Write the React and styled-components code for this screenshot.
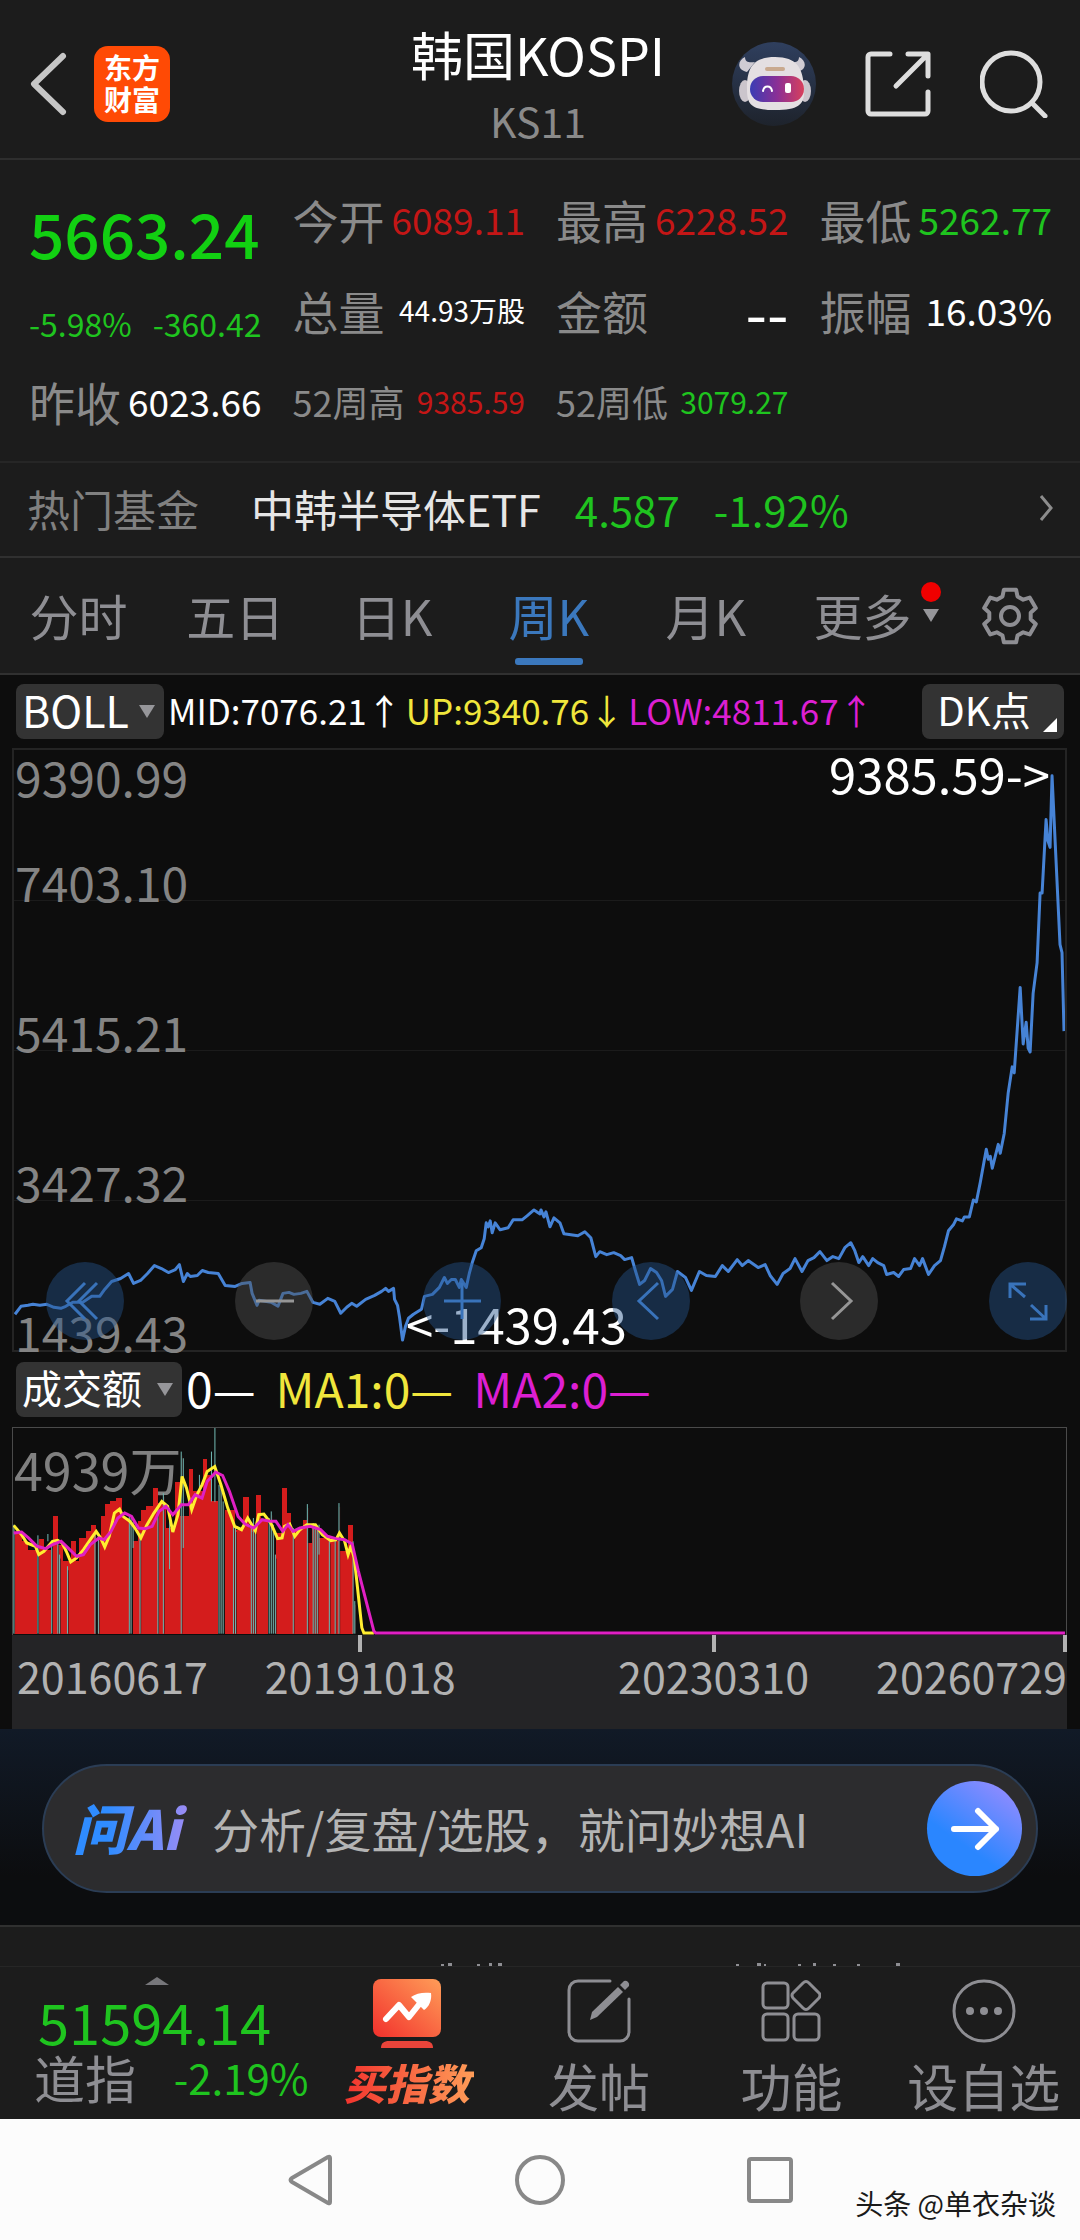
import React, { useState } from 'react';
import styled, { createGlobalStyle, css } from 'styled-components';

const GREEN = '#1fc41f';
const RED = '#c41616';
const WHITE = '#ffffff';
const YELLOW = '#f0e63c';
const MAGENTA = '#dc1fd2';
const BLUE = '#3b78bd';

const QUOTES = [
  { label: '今开', value: '6089.11', color: RED },
  { label: '最高', value: '6228.52', color: RED },
  { label: '最低', value: '5262.77', color: GREEN },
  { label: '总量', value: '44.93万股', color: WHITE, size: 28 },
  { label: '金额', value: '--', color: WHITE, size: 62 },
  { label: '振幅', value: '16.03%', color: WHITE },
  { label: '昨收', value: '6023.66', color: WHITE },
  { label: '52周高', value: '9385.59', color: RED, size: 30, small: true },
  { label: '52周低', value: '3079.27', color: GREEN, size: 30, small: true },
];

const TABS = ['分时', '五日', '日K', '周K', '月K', '更多'];

const PRICE_LINE =
  '1,568 7,560 14,559 19,558 26,559 33,558 40,561 47,562 52,560 59,556 69,556 78,550 86,550 91,543 98,535 107,532 115,527 120,537 127,534 134,527 141,519 148,522 155,526 162,523 166,518 170,535 174,527 177,530 184,529 189,524 195,526 205,527 212,539 222,540 229,537 237,536 239,547 244,559 246,554 258,556 265,560 270,547 276,546 281,548 288,547 294,545 300,556 307,558 315,552 322,555 328,567 334,561 339,557 344,560 353,553 362,549 369,545 373,542 376,545 381,542 382,553 385,559 387,571 390,594 393,580 396,572 401,568 409,563 412,550 420,548 427,541 432,531 435,537 439,533 443,533 447,541 449,533 454,541 457,527 460,516 464,504 469,501 472,492 474,476 476,480 478,474 480,486 483,476 488,483 496,481 501,473 510,473 515,469 522,463 528,467 ' +
  '529,463 532,470 534,465 538,480 542,471 548,476 552,487 559,488 566,489 573,485 579,491 584,510 588,505 595,508 602,506 609,509 613,513 620,511 624,525 628,538 633,534 639,522 645,526 650,534 654,550 661,543 666,525 674,531 680,544 688,525 695,529 704,530 711,519 717,525 726,513 731,519 737,514 747,521 754,518 759,529 766,538 772,527 779,522 784,512 791,525 797,514 803,511 809,505 816,514 822,510 828,512 834,501 840,496 844,504 848,516 852,510 858,519 862,512 867,516 873,519 876,528 883,526 888,530 893,523 900,522 904,512 909,519 912,512 918,528 924,519 930,514 934,500 938,484 943,478 946,472 952,474 954,470 959,470 963,453 966,455 970,435 976,402 978,412 980,409 982,421 988,397 990,406 994,386 998,345 1002,319 1004,325 1010,239 1013,296 1016,274 1018,300 1020,304 1023,245 1027,214 1030,144 1032,144 1036,70 1038,92 1040,98 1042,26 1045,90 1050,196 1052,204 1054,283';

// [from, to, top]
const RED_BARS = [
  [37, 60, 575], [60, 80, 600], [80, 105, 625], [110, 125, 592], [125, 146, 625], [151, 166, 525],
  [166, 180, 612], [180, 203, 660], [204, 218, 598], [218, 226, 660], [226, 246, 590], [246, 262, 570],
  [262, 276, 550], [282, 290, 585], [290, 302, 525], [302, 318, 487], [318, 335, 480], [335, 352, 471],
  [352, 372, 530], [384, 400, 600], [400, 407, 540], [407, 422, 505], [422, 442, 495], [442, 456, 441],
  [456, 480, 485], [480, 505, 560], [505, 520, 423], [520, 546, 525], [546, 560, 381], [560, 587, 450],
  [587, 600, 351], [600, 612, 400], [612, 632, 480], [652, 680, 505], [680, 703, 565], [703, 722, 468],
  [722, 743, 560], [743, 758, 462], [758, 778, 540], [800, 818, 575], [818, 832, 441], [832, 845, 515],
  [845, 878, 565], [878, 890, 535], [890, 906, 605], [906, 925, 560], [925, 957, 590], [957, 985, 600],
  [985, 1010, 628], [1010, 1025, 552],
];

// [x, top, bottom]
const TEAL_BARS = [
  [37, 550, 878], [107, 582, 878], [136, 578, 600], [147, 610, 878], [165, 600, 878], [170, 640, 878],
  [193, 675, 878], [273, 580, 878], [283, 580, 878], [373, 520, 878], [378, 530, 878], [384, 540, 620],
  [404, 575, 878], [456, 500, 878], [472, 455, 878], [490, 500, 684], [524, 330, 878], [530, 350, 620],
  [577, 400, 440], [612, 330, 480], [622, 259, 482], [634, 430, 878], [640, 440, 878], [646, 480, 878],
  [676, 545, 878], [682, 560, 878], [728, 560, 878], [734, 530, 878], [740, 560, 878], [780, 530, 878],
  [786, 510, 878], [792, 550, 878], [798, 640, 878], [850, 560, 878], [891, 488, 878], [908, 545, 878],
  [914, 550, 878], [920, 560, 878], [925, 550, 640], [955, 595, 878], [972, 590, 878], [983, 485, 878],
  [1024, 600, 878], [1029, 780, 878],
];

const MA1_LINE =
  '37,552 60,580 75,605 100,615 110,640 125,630 150,600 165,597 178,605 190,630 203,662 220,650 240,625 260,595 277,570 290,590 302,617 315,585 330,515 345,503 355,525 375,540 390,560 407,590 425,550 445,515 468,480 485,495 500,572 515,520 527,405 540,440 555,505 570,460 585,430 600,390 622,375 640,430 660,500 680,555 700,565 718,530 740,568 750,520 765,518 785,545 805,592 818,590 825,555 840,548 855,585 870,565 890,550 915,550 935,580 960,598 975,595 985,575 1000,600 1010,640 1018,615 1028,650 1050,860 1056,876 1085,876';
const MA2_LINE =
  '37,575 60,572 80,590 105,615 130,622 150,610 175,600 195,620 220,645 240,640 260,610 285,590 300,595 320,570 340,530 360,515 380,525 400,560 420,562 440,555 460,510 480,495 500,520 525,490 545,490 565,460 585,470 600,420 625,392 645,402 665,450 690,525 710,548 735,560 760,535 785,540 800,540 820,570 835,550 850,570 870,560 900,555 930,565 950,585 975,592 1000,595 1022,608 1040,690 1085,870 1090,876 3096,876';

const polar = (r, deg) => {
  const a = (deg * Math.PI) / 180;
  return `${(30 + r * Math.sin(a)).toFixed(1)},${(30 - r * Math.cos(a)).toFixed(1)}`;
};
const GEAR = [0, 60, 120, 180, 240, 300]
  .flatMap((d) => [polar(21, d - 21), polar(27, d - 13), polar(27, d + 13), polar(21, d + 21)])
  .join(' ');

const RobotIcon = () => (
  <svg width="84" height="84" viewBox="0 0 84 84">
    <defs>
      <linearGradient id="visor" x1="0" x2="1">
        <stop offset="0" stopColor="#3a3cb4" />
        <stop offset="0.5" stopColor="#8a2f96" />
        <stop offset="1" stopColor="#d8405c" />
      </linearGradient>
      <linearGradient id="disc" x1="0" y1="0" x2="0" y2="1">
        <stop offset="0" stopColor="#2f3f5e" />
        <stop offset="1" stopColor="#1e232c" />
      </linearGradient>
    </defs>
    <circle cx="42" cy="42" r="42" fill="url(#disc)" />
    <path d="M13 15c-8 4-8 13 2 15l8-10c-6 1-10 0-10-5zM67 15c8 4 8 13-2 15l-8-10c6 1 10 0 10-5z" fill="#cfcbd3" />
    <ellipse cx="13" cy="49" rx="6" ry="11" fill="#cbc5cc" />
    <ellipse cx="73" cy="49" rx="6" ry="11" fill="#cbc5cc" />
    <path d="M15 46c0-20 6-31 28-31s28 11 29 31c1 16-4 22-29 22S15 62 15 46z" fill="#e4dfe2" />
    <rect x="33" y="25" width="20" height="4" rx="2" fill="#c9a98f" />
    <rect x="18" y="34" width="54" height="26" rx="13" fill="url(#visor)" />
    <path d="M31 49c1-6 8-6 9 0" fill="none" stroke="#fff" strokeWidth="2" strokeLinecap="round" />
    <rect x="53" y="41" width="6" height="10" rx="2" fill="#fff" />
  </svg>
);

const ShareIcon = () => (
  <svg width="66" height="66" viewBox="0 0 66 66" fill="none" stroke="#dedede" strokeWidth="5" strokeLinecap="round" strokeLinejoin="round">
    <path d="M25 3H6a3 3 0 0 0-3 3v54a3 3 0 0 0 3 3h54a3 3 0 0 0 3-3V41" />
    <path d="M43 3h20v22M62 4L31 35" />
  </svg>
);

const SearchIcon = () => (
  <svg width="68" height="68" viewBox="0 0 68 68" fill="none" stroke="#dedede" strokeWidth="5" strokeLinecap="round">
    <circle cx="31" cy="32" r="29" />
    <path d="M52 53l13 13" />
  </svg>
);

const ToolIcon = ({ d, color }) => (
  <svg width="78" height="78" viewBox="0 0 78 78" fill="none" stroke={color} strokeWidth="3">
    <path d={d} />
  </svg>
);

const TOOLS = [
  { name: '快退', blue: true, d: 'M39 21L21 39l18 18M51 21L33 39l18 18' },
  { name: '缩小', d: 'M21 39h38' },
  { name: '放大', blue: true, d: 'M21 39h37M39 21v36' },
  { name: '左移', blue: true, d: 'M46 21L27 39l19 18' },
  { name: '右移', d: 'M32 21l19 18-19 18' },
  { name: '全屏', blue: true, d: 'M37 22H21v14M21 22l15 13M57 43v14H41M57 57L42 43' },
];

const Kline = () => (
  <ChartBox>
    <ChartBand first>
      <AxisLabel>9390.99</AxisLabel>
      <AxisLabel>7403.10</AxisLabel>
    </ChartBand>
    <ChartBand><AxisLabel>5415.21</AxisLabel></ChartBand>
    <ChartBand><AxisLabel>3427.32</AxisLabel></ChartBand>
    <ChartBand><AxisLabel>1439.43</AxisLabel></ChartBand>
    <Plot viewBox="0 0 1055 604" preserveAspectRatio="none">
      <polyline points={PRICE_LINE} fill="none" stroke="#4683d6" strokeWidth="3" strokeLinejoin="round" vectorEffect="non-scaling-stroke" />
    </Plot>
    <HighMark>9385.59-&gt;</HighMark>
    <LowMark>&lt;-1439.43</LowMark>
    <ToolRow>
      {TOOLS.map((t) => (
        <ToolButton key={t.name} blue={t.blue ? 1 : 0} aria-label={t.name}>
          <ToolIcon d={t.d} color={t.blue ? '#3973ba' : '#969696'} />
        </ToolButton>
      ))}
    </ToolRow>
  </ChartBox>
);

const Volume = () => (
  <VolumeBox>
    <VolumeLabel>4939万</VolumeLabel>
    <Plot viewBox="35 259 3064 623" preserveAspectRatio="none">
      {RED_BARS.map(([from, to, top]) => (
        <rect key={from} x={from} y={top} width={to - from} height={880 - top} fill="#d41c1c" shapeRendering="crispEdges" />
      ))}
      {TEAL_BARS.map(([x, top, bottom]) => (
        <g key={x}>
          {bottom > 800 && <rect x={x + 1} y={top + 12} width="3" height={bottom - top - 12} fill="#3a1a1a" />}
          <rect x={x - 1} y={top} width="3" height={bottom - top} fill="#6fb5b0" />
        </g>
      ))}
      <polyline points={MA1_LINE} fill="none" stroke="#ffee30" strokeWidth="3" vectorEffect="non-scaling-stroke" />
      <polyline points={MA2_LINE} fill="none" stroke="#e01fc4" strokeWidth="3" vectorEffect="non-scaling-stroke" />
    </Plot>
  </VolumeBox>
);

const App = () => {
  const [activeTab, setActiveTab] = useState('周K');

  return (
    <Page>
      <GlobalStyle />
      <Header>
        <HeaderSide>
          <IconButton aria-label="返回">
            <svg width="40" height="68" viewBox="0 0 40 68" fill="none" stroke="#c6c6c6" strokeWidth="6" strokeLinecap="round" strokeLinejoin="round">
              <path d="M35 6L6 34l29 28" />
            </svg>
          </IconButton>
          <Logo href="#">东方<br />财富</Logo>
        </HeaderSide>
        <TitleBlock>
          <Title>韩国KOSPI</Title>
          <Code>KS11</Code>
        </TitleBlock>
        <HeaderSide end>
          <IconButton aria-label="助手"><RobotIcon /></IconButton>
          <IconButton aria-label="分享"><ShareIcon /></IconButton>
          <IconButton aria-label="搜索"><SearchIcon /></IconButton>
        </HeaderSide>
      </Header>

      <QuotePanel>
        <Lead>
          <Price>5663.24</Price>
          <Change><span>-5.98%</span><span>-360.42</span></Change>
        </Lead>
        {QUOTES.map((q) => (
          <Quote key={q.label}>
            <QuoteLabel small={q.small ? 1 : 0}>{q.label}</QuoteLabel>
            <QuoteValue color={q.color} size={q.size}>{q.value}</QuoteValue>
          </Quote>
        ))}
      </QuotePanel>

      <FundRow href="#">
        <FundLabel>热门基金</FundLabel>
        <FundName>中韩半导体ETF</FundName>
        <FundValue>4.587</FundValue>
        <FundValue>-1.92%</FundValue>
        <svg width="14" height="26" viewBox="0 0 14 26" fill="none" stroke="#8c8c8c" strokeWidth="3">
          <path d="M2 1l10 12-10 12" />
        </svg>
      </FundRow>

      <Tabs>
        {TABS.map((name) => (
          <Tab key={name} active={name === activeTab ? 1 : 0} onClick={() => setActiveTab(name)}>
            {name}
            {name === '更多' && (
              <TabMore>
                <Dot />
                <Caret />
              </TabMore>
            )}
          </Tab>
        ))}
        <GearButton aria-label="设置">
          <svg width="60" height="60" viewBox="0 0 60 60" fill="none" stroke="#8e8e93" strokeWidth="4" strokeLinejoin="round">
            <polygon points={GEAR} />
            <circle cx="30" cy="30" r="9" />
          </svg>
        </GearButton>
      </Tabs>

      <ChartArea>
        <IndicatorRow>
          <Picker>
            <PickerSelect aria-label="主图指标" chars={107} size={43}><option>BOLL</option></PickerSelect>
            <Caret />
          </Picker>
          <Indicator color={WHITE}>MID:7076.21↑</Indicator>
          <Indicator color={YELLOW}>UP:9340.76↓</Indicator>
          <Indicator color={MAGENTA}>LOW:4811.67↑</Indicator>
          <DkButton>DK点<Corner /></DkButton>
        </IndicatorRow>
        <Kline />
        <VolumeRow>
          <Picker>
            <PickerSelect aria-label="副图指标" chars={125} size={40}><option>成交额</option></PickerSelect>
            <Caret />
          </Picker>
          <VolumeValue color={WHITE}>0—</VolumeValue>
          <VolumeValue color={YELLOW}>MA1:0—</VolumeValue>
          <VolumeValue color={MAGENTA}>MA2:0—</VolumeValue>
        </VolumeRow>
        <Volume />
        <DateAxis>
          <DateCell align="flex-start"><Tick hidden />20160617</DateCell>
          <DateCell align="center"><Tick />20191018</DateCell>
          <DateCell align="center"><Tick />20230310</DateCell>
          <DateCell align="flex-end"><Tick />20260729</DateCell>
        </DateAxis>
      </ChartArea>

      <AskPanel>
        <AskBox>
          <AskLogo>问Ai</AskLogo>
          <AskInput aria-label="提问" placeholder="分析/复盘/选股，就问妙想AI" />
          <SendButton aria-label="发送">
            <svg width="50" height="46" viewBox="0 0 50 46" fill="none" stroke="#fff" strokeWidth="6" strokeLinecap="round" strokeLinejoin="round">
              <path d="M4 23h42M28 5l18 18-18 18" />
            </svg>
          </SendButton>
        </AskBox>
      </AskPanel>

      <Peek>
        <svg width="480" height="3" viewBox="0 0 480 3" fill="#8e8e93">
          <path d="M0 1h3v2H0zM7 0h4v3H7zM36 1h3v2h-3zM48 0h3v3h-3zM57 0h4v3h-4zM295 1h3v2h-3zM316 0h4v3h-4zM323 1h2v2h-2zM357 1h3v2h-3zM372 0h3v3h-3zM392 1h3v2h-3zM416 1h3v2h-3zM455 0h4v3h-4z" />
        </svg>
      </Peek>

      <BottomBar>
        <IndexBlock href="#">
          <UpCaret />
          <IndexPrice>51594.14</IndexPrice>
          <IndexLine><IndexName>道指</IndexName><span>-2.19%</span></IndexLine>
        </IndexBlock>
        <Action>
          <svg width="68" height="70" viewBox="0 0 68 70">
            <defs>
              <linearGradient id="buy" x1="0" y1="1" x2="1" y2="0">
                <stop offset="0" stopColor="#f2302c" />
                <stop offset="1" stopColor="#ff9d58" />
              </linearGradient>
            </defs>
            <rect width="68" height="58" rx="8" fill="url(#buy)" />
            <path d="M8 69c0-5 3-7 8-7h36c5 0 8 2 8 7z" fill="#e8443a" />
            <path d="M13 40l13-14 10 12 12-15" fill="none" stroke="#fff" strokeWidth="6" strokeLinecap="round" strokeLinejoin="round" />
            <path d="M38 18c5-4 13-5 20-4 1 7-2 14-7 17z" fill="#fff" />
          </svg>
          <BuyLabel>买指数</BuyLabel>
        </Action>
        <Action>
          <svg width="64" height="64" viewBox="0 0 64 64" fill="none" stroke="#8e8e93" strokeWidth="3" strokeLinecap="round">
            <path d="M43 2H11a9 9 0 0 0-9 9v42a9 9 0 0 0 9 9h42a9 9 0 0 0 9-9V20" />
            <path d="M23 41l2-8 26-25 5 5-26 25z" fill="#8e8e93" stroke="none" />
            <path d="M53 6l4-4a4 4 0 0 1 5 5l-4 4z" fill="#8e8e93" stroke="none" />
          </svg>
          <ActionLabel>发帖</ActionLabel>
        </Action>
        <Action>
          <svg width="60" height="64" viewBox="0 0 60 64" fill="none" stroke="#8e8e93" strokeWidth="3" strokeLinejoin="round">
            <rect x="2" y="4" width="25" height="25" rx="4" />
            <rect x="2" y="35" width="25" height="26" rx="4" />
            <rect x="33" y="35" width="25" height="26" rx="4" />
            <path d="M42 4q3-3 6 0l10 10q2 2 0 5L48 29q-3 3-6 0L32 19q-2-3 0-5z" />
          </svg>
          <ActionLabel>功能</ActionLabel>
        </Action>
        <Action>
          <svg width="64" height="64" viewBox="0 0 64 64" fill="#8e8e93">
            <circle cx="32" cy="32" r="30" fill="none" stroke="#8e8e93" strokeWidth="3" />
            <circle cx="18" cy="32" r="4" />
            <circle cx="32" cy="32" r="4" />
            <circle cx="46" cy="32" r="4" />
          </svg>
          <ActionLabel>设自选</ActionLabel>
        </Action>
      </BottomBar>

      <SystemNav>
        <NavButton aria-label="后退">
          <svg width="50" height="54" viewBox="0 0 50 54" fill="none" stroke="#888" strokeWidth="4" strokeLinejoin="round">
            <path d="M45 5v44q0 2-2 1L7 29q-3-2 0-4L43 4q2-1 2 1z" />
          </svg>
        </NavButton>
        <NavButton aria-label="主页">
          <svg width="50" height="50" viewBox="0 0 50 50" fill="none" stroke="#888" strokeWidth="4">
            <circle cx="25" cy="25" r="23" />
          </svg>
        </NavButton>
        <NavButton aria-label="最近任务">
          <svg width="50" height="50" viewBox="0 0 50 50" fill="none" stroke="#888" strokeWidth="4">
            <rect x="4" y="4" width="42" height="42" rx="2" />
          </svg>
        </NavButton>
        <Watermark>头条 @单衣杂谈</Watermark>
      </SystemNav>
    </Page>
  );
};

export default App;

const GlobalStyle = createGlobalStyle`
  * {
    box-sizing: border-box;
  }
  body {
    margin: 0;
    background: #1c1c1c;
    font-family: "Noto Sans CJK SC", "Noto Sans", sans-serif;
  }
  button, select, input {
    font-family: inherit;
    border: 0;
    padding: 0;
    margin: 0;
    background: none;
    color: inherit;
  }
  a {
    color: inherit;
    text-decoration: none;
  }
  svg {
    display: block;
    flex-shrink: 0;
  }
`;

const Page = styled.main`
  background: #1c1c1c;
  white-space: nowrap;
`;

const Header = styled.header`
  display: grid;
  grid-template-columns: 1fr auto 1fr;
  align-items: center;
  height: 160px;
  padding: 9px 32px 0 28px;
  border-bottom: 2px solid #2e2e2e;
`;

const HeaderSide = styled.div.withConfig({ shouldForwardProp: (p) => p !== 'end' })`
  display: flex;
  align-items: center;
  gap: ${props => (props.end ? '49px' : '26px')};
  justify-content: ${props => (props.end ? 'flex-end' : 'flex-start')};
`;

const IconButton = styled.button`
  display: flex;
  cursor: pointer;
`;

const Logo = styled.a`
  width: 76px;
  height: 76px;
  padding-top: 5px;
  border-radius: 14px;
  background: #ff4a05;
  color: #fff;
  font-size: 28px;
  font-weight: 700;
  line-height: 32px;
  text-align: center;
`;

const TitleBlock = styled.div`
  padding-top: 6px;
  text-align: center;
`;

const Title = styled.h1`
  margin: 0;
  color: #fff;
  font-size: 52px;
  font-weight: 400;
  line-height: 66px;
`;

const Code = styled.div`
  color: #8a8a8a;
  font-size: 41px;
  line-height: 66px;
`;

const QuotePanel = styled.section`
  display: grid;
  grid-template-columns: repeat(4, 1fr);
  grid-auto-rows: 91px;
  column-gap: 31px;
  padding: 13px 28px 15px 29px;
  border-bottom: 2px solid #262626;
`;

const Lead = styled.div`
  grid-row: span 2;
  display: flex;
  flex-direction: column;
  justify-content: space-between;
  padding-top: 22px;
  color: ${GREEN};
`;

const Price = styled.div`
  color: #12d012;
  font-size: 62px;
  font-weight: 500;
  line-height: 74px;
`;

const Change = styled.div`
  display: flex;
  justify-content: space-between;
  font-size: 32px;
  line-height: 64px;
`;

const Quote = styled.div`
  display: flex;
  align-items: center;
  justify-content: space-between;
`;

const QuoteLabel = styled.span.withConfig({ shouldForwardProp: (p) => p !== 'small' })`
  color: #8a8a8a;
  font-size: ${props => (props.small ? 36 : 46)}px;
  line-height: 60px;
`;

const QuoteValue = styled.span.withConfig({ shouldForwardProp: (p) => p !== 'size' })`
  color: ${props => props.color};
  font-size: ${props => props.size || 37}px;
  line-height: 60px;
`;

const FundRow = styled.a`
  display: flex;
  align-items: center;
  height: 95px;
  padding: 0 27px 3px;
  border-bottom: 2px solid #303030;
  font-size: 42px;
`;

const FundLabel = styled.span`
  margin-right: 52px;
  color: #808080;
  font-size: 43px;
`;

const FundName = styled.span`
  margin-right: 4px;
  color: #e6e6e6;
  font-size: 43px;
`;

const FundValue = styled.span`
  margin-left: 30px;
  color: ${GREEN};

  & + & {
    margin-left: 34px;
  }
  & + svg {
    margin-left: auto;
  }
`;

const Tabs = styled.nav`
  display: grid;
  grid-template-columns: repeat(6, 1fr) 139px;
  height: 117px;
  border-bottom: 2px solid #303030;
`;

const Tab = styled.button.withConfig({ shouldForwardProp: (p) => p !== 'active' })`
  position: relative;
  padding-bottom: 3px;
  color: #8e8e93;
  font-size: 49px;
  cursor: pointer;
  ${props => props.active && css`
    color: ${BLUE};
    &::after {
      content: '';
      position: absolute;
      left: calc(50% - 34px);
      bottom: 8px;
      width: 68px;
      height: 7px;
      border-radius: 3px;
      background: ${BLUE};
    }
  `}
`;

const TabMore = styled.span`
  position: absolute;
  top: 24px;
  right: 0;
  display: flex;
  flex-direction: column;
  align-items: center;
  gap: 7px;
`;

const Dot = styled.span`
  width: 20px;
  height: 20px;
  border-radius: 50%;
  background: #f00000;
`;

const Caret = styled.span`
  flex-shrink: 0;
  border: 8px solid transparent;
  border-top: 13px solid #96969a;
  border-bottom: 0;
`;

const GearButton = styled.button`
  display: flex;
  align-items: center;
  justify-content: center;
  cursor: pointer;
`;

const ChartArea = styled.section`
  padding: 0 13px 0 12px;
  background: #0d0d0d;
`;

const IndicatorRow = styled.div`
  display: flex;
  align-items: center;
  height: 73px;
  gap: 4px;
  padding: 0 3px 0 4px;
`;

const Picker = styled.div`
  display: flex;
  align-items: center;
  height: 55px;
  padding: 0 9px 0 6px;
  border-radius: 8px;
  background: #333;
`;

const PickerSelect = styled.select.withConfig({ shouldForwardProp: (p) => p !== 'chars' && p !== 'size' })`
  appearance: none;
  width: ${props => props.chars + 10}px;
  height: 66px;
  margin-bottom: 6px;
  color: #fff;
  font-size: ${props => props.size}px;
`;

const Indicator = styled.span`
  padding-bottom: 4px;
  color: ${props => props.color};
  font-size: 35px;
`;

const DkButton = styled.button`
  position: relative;
  width: 142px;
  height: 55px;
  margin-left: auto;
  padding: 0 32px 4px 14px;
  border-radius: 8px;
  background: #333;
  color: #fff;
  font-size: 40px;
  line-height: 51px;
`;

const Corner = styled.span`
  position: absolute;
  right: 7px;
  bottom: 7px;
  border-left: 14px solid transparent;
  border-bottom: 14px solid #fff;
`;

const ChartBox = styled.div`
  position: relative;
  border: 2px solid #242424;
`;

const ChartBand = styled.div.withConfig({ shouldForwardProp: (p) => p !== 'first' })`
  display: flex;
  flex-direction: column;
  justify-content: ${props => (props.first ? 'space-between' : 'flex-end')};
  height: 150px;
  padding: ${props => (props.first ? '7px' : 0)} 0 0 1px;

  & + & {
    border-top: 1px solid #1b1b1b;
  }
`;

const AxisLabel = styled.span`
  color: #848484;
  font-size: 48px;
  line-height: 38px;
`;

const Plot = styled.svg`
  position: absolute;
  inset: 0;
  width: 100%;
  height: 100%;
`;

const HighMark = styled.span`
  position: absolute;
  top: 4px;
  right: 15px;
  color: #fff;
  font-size: 49px;
  line-height: 38px;
`;

const LowMark = styled.span`
  position: absolute;
  left: 37.3%;
  bottom: 8px;
  color: #fff;
  font-size: 49px;
  line-height: 38px;
`;

const ToolRow = styled.div`
  position: absolute;
  left: 32px;
  right: -2px;
  bottom: 10px;
  display: flex;
  justify-content: space-between;
`;

const ToolButton = styled.button.withConfig({ shouldForwardProp: (p) => p !== 'blue' })`
  width: 78px;
  height: 78px;
  border-radius: 50%;
  background: ${props => (props.blue ? 'rgba(36, 82, 138, 0.45)' : 'rgba(80, 80, 80, 0.45)')};
  cursor: pointer;
`;

const VolumeRow = styled.div`
  display: flex;
  align-items: center;
  gap: 20px;
  height: 75px;
  padding-left: 4px;

  ${Picker} {
    margin-right: -16px;
  }
`;

const VolumeValue = styled.span`
  padding-bottom: 6px;
  color: ${props => props.color};
  font-size: 48px;
  line-height: 60px;
`;

const VolumeBox = styled.div`
  position: relative;
  height: 208px;
  padding: 9px 0 0 1px;
  border: 1px solid #4a4a4a;
  border-bottom: 0;
`;

const VolumeLabel = styled.span`
  color: #808080;
  font-size: 52px;
  line-height: 64px;
`;

const DateAxis = styled.div`
  display: grid;
  grid-template-columns: 16% 34% 33% 17%;
  height: 94px;
  background: #242426;
  color: #b2b2b2;
  font-size: 43px;
  line-height: 46px;
`;

const DateCell = styled.div`
  display: flex;
  flex-direction: column;
  align-items: ${props => props.align};

  &:first-child {
    padding-left: 5px;
  }
`;

const Tick = styled.span.withConfig({ shouldForwardProp: (p) => p !== 'hidden' })`
  width: 4px;
  height: 17px;
  background: ${props => (props.hidden ? 'transparent' : '#b2b2b2')};
`;

const AskPanel = styled.section`
  padding: 35px 42px 32px;
  border-bottom: 2px solid #303030;
  background: linear-gradient(#111a27, #0c0d0f 75%);
`;

const AskBox = styled.form`
  display: flex;
  align-items: center;
  height: 129px;
  padding: 0 14px 0 27px;
  border: 2px solid #2b3d55;
  border-radius: 65px;
  background: #2c2c2e;
`;

const AskLogo = styled.span`
  margin-right: 20px;
  padding: 0 12px 4px 2px;
  background: linear-gradient(90deg, #2f8cff 30%, #a08cf5);
  background-clip: text;
  -webkit-background-clip: text;
  color: transparent;
  font-size: 54px;
  font-style: italic;
  font-weight: 900;
  line-height: 80px;
`;

const AskInput = styled.input`
  flex: 1;
  min-width: 0;
  height: 80px;
  padding-bottom: 2px;
  outline: none;
  font-size: 47px;

  &::placeholder {
    color: #b4b4b4;
    opacity: 1;
  }
`;

const SendButton = styled.button`
  display: flex;
  align-items: center;
  justify-content: center;
  width: 95px;
  height: 95px;
  border-radius: 50%;
  background: linear-gradient(215deg, #9a8cff 5%, #2a86ff 65%);
  cursor: pointer;
`;

const Peek = styled.div`
  display: flex;
  align-items: flex-end;
  height: 40px;
  padding-left: 441px;
  border-bottom: 1px solid #262626;
`;

const BottomBar = styled.footer`
  display: grid;
  grid-template-columns: minmax(0, 310fr) repeat(4, minmax(0, 192fr));
  height: 152px;
`;

const IndexBlock = styled.a`
  display: flex;
  flex-direction: column;
  padding: 10px 2px 0 34px;
  color: ${GREEN};
`;

const UpCaret = styled.span`
  align-self: center;
  margin-right: 28px;
  border: 12px solid transparent;
  border-top: 0;
  border-bottom: 8px solid #77777b;
`;

const IndexPrice = styled.span`
  padding: 6px 0 0 4px;
  font-size: 56px;
  line-height: 60px;
`;

const IndexLine = styled.span`
  display: flex;
  align-items: center;
  justify-content: space-between;
  font-size: 42px;
  line-height: 52px;
`;

const IndexName = styled.span`
  color: #8e8e93;
  font-size: 51px;
`;

const Action = styled.button`
  display: flex;
  flex-direction: column;
  align-items: center;
  padding-top: 12px;
  cursor: pointer;
`;

const ActionLabel = styled.span`
  margin-top: 12px;
  color: #8e8e93;
  font-size: 51px;
  line-height: 60px;
`;

const BuyLabel = styled.span`
  margin-top: 5px;
  padding: 0 4px;
  background: linear-gradient(90deg, #f2302c, #ff9d58);
  background-clip: text;
  -webkit-background-clip: text;
  color: transparent;
  font-size: 42px;
  font-style: italic;
  font-weight: 900;
  line-height: 56px;
`;

const SystemNav = styled.nav`
  position: relative;
  display: flex;
  align-items: center;
  justify-content: center;
  gap: 180px;
  height: 122px;
  background: #fcfcfc;
`;

const NavButton = styled.button`
  cursor: pointer;
`;

const Watermark = styled.span`
  position: absolute;
  right: 24px;
  bottom: 20px;
  color: #1a1a1a;
  font-size: 28px;
  line-height: 36px;
`;
